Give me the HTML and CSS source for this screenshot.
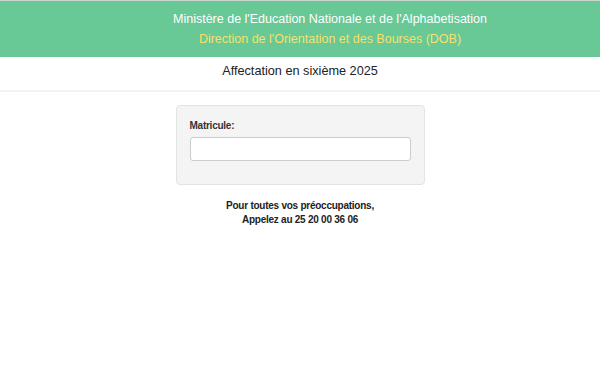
FILE: index.html
```html
<!DOCTYPE html>
<html lang="fr">
<head>
    <meta charset="UTF-8">
    <meta name="viewport" content="width=device-width, initial-scale=1.0">
    <title>Affectation en sixième 2025</title>
    <link rel="stylesheet" href="styles.css">
</head>
<body>
    <div class="header">
        <p class="ministere">Ministère de l'Education Nationale et de l'Alphabetisation</p>
        <p class="direction">Direction de l'Orientation et des Bourses (DOB)</p>
    </div>

    <div class="subtitle">Affectation en sixième 2025</div>

    <div class="container">
        <form class="well" id="searchForm">
            <label for="matricule">Matricule:</label>
            <input type="text" id="matricule" name="matricule">
        </form>

        <p class="contact">Pour toutes vos préoccupations,<br>Appelez au 25 20 00 36 06</p>
    </div>
</body>
</html>
```

FILE: styles.css
```css
body {
    font-family: 'Liberation Sans', Arial, sans-serif;
    margin: 0;
    background: #ffffff;
    color: #333333;
}

.header {
    background-color: #68c896;
    border-top: 1px solid #c9d6cf;
    padding: 8px 0 7px 60px;
    text-align: center;
    height: 41px;
}

.header p {
    margin: 0;
    font-size: 12.5px;
    line-height: 20px;
}

.ministere {
    color: #ffffff;
}

.direction {
    color: #f7e06c;
}

.subtitle {
    text-align: center;
    font-size: 12.7px;
    color: #222222;
    padding: 7px 0 0;
    height: 26px;
    border-bottom: 2px solid #f2f2f2;
}

.container {
    width: 249px;
    margin: 13px auto 0;
}

.well {
    background-color: #f4f4f4;
    border: 1px solid #e3e3e3;
    border-radius: 4px;
    padding: 14px 13px 23px;
}

label {
    display: block;
    font-weight: bold;
    font-size: 10px;
    letter-spacing: -0.25px;
    color: #333333;
    margin-bottom: 6px;
}

input[type="text"] {
    display: block;
    box-sizing: border-box;
    width: 100%;
    height: 24px;
    border: 1px solid #cccccc;
    border-radius: 3px;
    background: #ffffff;
    margin: 0;
}

.contact {
    text-align: center;
    font-weight: bold;
    font-size: 10px;
    letter-spacing: -0.25px;
    line-height: 14px;
    color: #222222;
    margin: 14px 0 0;
}
```
